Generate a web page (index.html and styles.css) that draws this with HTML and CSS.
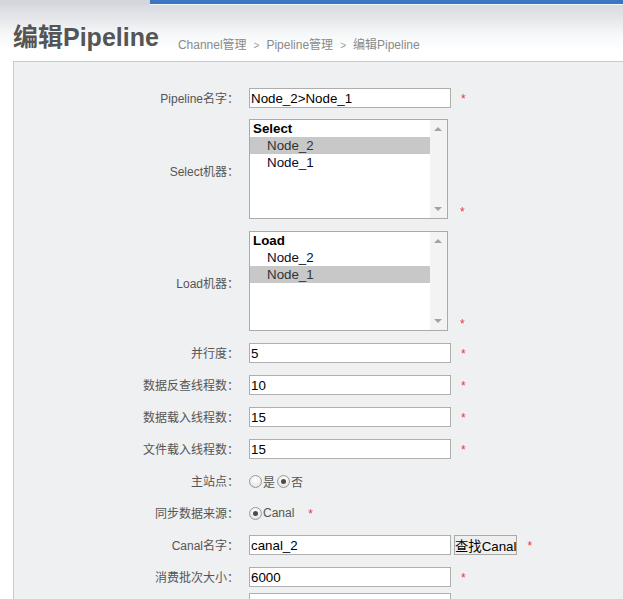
FILE: index.html
```html
<!DOCTYPE html>
<html lang="zh">
<head>
<meta charset="utf-8">
<title>编辑Pipeline</title>
<link rel="stylesheet" href="styles.css">
</head>
<body>
<div class="header">
  <div class="topbar"><div class="topbar-left"></div><div class="topbar-right"></div></div>
  <div class="titlerow">
    <h1 class="title">编辑Pipeline</h1>
    <div class="crumbs">
      <span>Channel管理</span><span class="sep">&gt;</span><span>Pipeline管理</span><span class="sep">&gt;</span><span>编辑Pipeline</span>
    </div>
  </div>
</div>
<div class="panel">
  <div class="form">
    <div class="label">Pipeline名字：</div>
    <div class="field first"><input class="text" type="text" value="Node_2&gt;Node_1"><span class="req">*</span></div>

    <div class="label tall">Select机器：</div>
    <div class="field bottom">
      <div class="listbox">
        <div class="list">
          <div class="group">Select</div>
          <div class="opt selected">Node_2</div>
          <div class="opt">Node_1</div>
        </div>
        <div class="scroll"><span class="arrow up"></span><span class="arrow down"></span></div>
      </div>
      <span class="req req-list">*</span>
    </div>

    <div class="label tall">Load机器：</div>
    <div class="field bottom">
      <div class="listbox">
        <div class="list">
          <div class="group">Load</div>
          <div class="opt">Node_2</div>
          <div class="opt selected">Node_1</div>
        </div>
        <div class="scroll"><span class="arrow up"></span><span class="arrow down"></span></div>
      </div>
      <span class="req req-list">*</span>
    </div>

    <div class="label">并行度：</div>
    <div class="field"><input class="text" type="text" value="5"><span class="req">*</span></div>

    <div class="label">数据反查线程数：</div>
    <div class="field"><input class="text" type="text" value="10"><span class="req">*</span></div>

    <div class="label">数据载入线程数：</div>
    <div class="field"><input class="text" type="text" value="15"><span class="req">*</span></div>

    <div class="label">文件载入线程数：</div>
    <div class="field"><input class="text" type="text" value="15"><span class="req">*</span></div>

    <div class="label">主站点：</div>
    <div class="field">
      <span class="radio"></span><span class="rtext">是</span>
      <span class="radio checked gap"></span><span class="rtext">否</span>
    </div>

    <div class="label">同步数据来源：</div>
    <div class="field">
      <span class="radio checked"></span><span class="rtext">Canal</span><span class="req req-canal">*</span>
    </div>

    <div class="label">Canal名字：</div>
    <div class="field"><input class="text" type="text" value="canal_2"><button class="btn" type="button">查找Canal</button><span class="req">*</span></div>

    <div class="label">消费批次大小：</div>
    <div class="field"><input class="text" type="text" value="6000"><span class="req">*</span></div>

    <div class="label last"></div>
    <div class="field last"><input class="text" type="text" value=""></div>
  </div>
</div>
</body>
</html>
```
FILE: styles.css
```css
html, body {
  margin: 0;
  padding: 0;
  overflow: hidden;
  background: #fff;
}
body {
  font-family: "Liberation Sans", "Noto Sans CJK SC", Arial, sans-serif;
  font-size: 12px;
  color: #555;
  width: 623px;
  height: 599px;
}
.header {
  height: 61px;
  background: linear-gradient(to bottom, #d3d6dc 0px, #e4e6ea 18px, #f6f7f8 34px, #ffffff 50px);
}
.topbar {
  display: flex;
  height: 5px;
}
.topbar-left {
  width: 150px;
  background: #d3d6dc;
}
.topbar-right {
  flex: 1;
  background: #3a76c1;
  border-bottom: 1px solid #f4f5f7;
  height: 4px;
}
.titlerow {
  display: flex;
  align-items: baseline;
  padding-left: 13px;
  padding-top: 17px;
}
.title {
  margin: 0;
  font-size: 25px;
  font-weight: bold;
  color: #555;
  line-height: 30px;
}
.crumbs {
  margin-left: 19px;
  font-size: 12px;
  color: #8a8a8a;
  position: relative;
  top: 3px;
}
.sep {
  margin: 0 7px;
  font-size: 10px;
  color: #999;
}
.panel {
  margin-left: 13px;
  margin-right: -30px;
  border: 1px solid #cacaca;
  background: #eff0f2;
  padding: 26px 0 40px 0;
  height: 600px;
}
.form {
  display: grid;
  grid-template-columns: 225px 1fr;
  column-gap: 10px;
  row-gap: 12px;
  align-items: center;
}
.field.first {
  margin-bottom: -1px;
}
.label {
  text-align: right;
  font-size: 12px;
  color: #555;
  line-height: 16px;
  align-self: center;
  position: relative;
  top: 1px;
}
.label.tall {
  top: 3px;
}
.field {
  display: flex;
  align-items: center;
  height: 20px;
}
.field.bottom {
  height: 100px;
  align-items: flex-end;
}
.field.last,
.label.last {
  margin-top: -6px;
}
.text {
  box-sizing: border-box;
  width: 202px;
  height: 20px;
  margin: 0;
  padding: 0 1px;
  border: 1px solid #aeaeae;
  background: #fff;
  font-family: "Liberation Sans", "Noto Sans CJK SC", Arial, sans-serif;
  font-size: 13.33px;
  color: #000;
  outline: none;
}
.req {
  color: #ee3350;
  font-size: 12px;
  margin-left: 10px;
  line-height: 12px;
  position: relative;
  top: 1px;
}
.req-list {
  margin-left: 12px;
  margin-bottom: 2px;
}
.req-canal {
  margin-left: 14px;
}
.listbox {
  box-sizing: border-box;
  width: 199px;
  height: 100px;
  border: 1px solid #aaaaaa;
  background: #fff;
  display: flex;
}
.list {
  flex: 1;
  font-size: 13.33px;
  color: #000;
}
.group {
  font-weight: bold;
  line-height: 17px;
  padding-left: 3px;
}
.opt {
  line-height: 17px;
  padding-left: 17px;
  color: #0a0a28;
}
.opt.selected {
  background: #c8c8c8;
  color: #333;
}
.scroll {
  width: 17px;
  background: #f3f3f3;
  position: relative;
}
.arrow {
  position: absolute;
  left: 4px;
  width: 0;
  height: 0;
  border-left: 4px solid transparent;
  border-right: 4px solid transparent;
}
.arrow.up {
  top: 7px;
  border-bottom: 4px solid #a3a3a3;
}
.arrow.down {
  bottom: 7px;
  border-top: 4px solid #a3a3a3;
}
.radio {
  box-sizing: border-box;
  display: inline-block;
  width: 13px;
  height: 13px;
  border-radius: 50%;
  border: 1px solid #9a9a9a;
  background: radial-gradient(circle at 50% 35%, #ffffff 0%, #eeeeee 55%, #d2d2d2 100%);
  position: relative;
  flex: none;
}
.radio.checked::after {
  content: "";
  position: absolute;
  left: 3px;
  top: 3px;
  width: 5px;
  height: 5px;
  border-radius: 50%;
  background: #4a4a4a;
}
.radio.gap {
  margin-left: 2px;
}
.rtext {
  font-size: 12px;
  color: #555;
  margin-left: 1px;
}
.btn {
  box-sizing: border-box;
  height: 20px;
  margin: 0 0 0 3px;
  padding: 0;
  border: 1px solid #a9a9a9;
  background: #efefef;
  font-family: "Liberation Sans", "Noto Sans CJK SC", Arial, sans-serif;
  font-size: 13.33px;
  color: #000;
  border-radius: 0;
}
```
